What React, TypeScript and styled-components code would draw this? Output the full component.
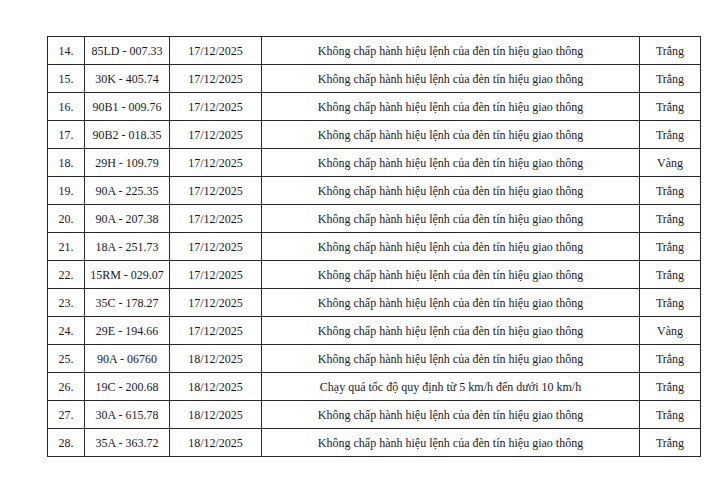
import React from "react";
import styled, { createGlobalStyle } from "styled-components";

const GlobalStyle = createGlobalStyle`
  html, body {
    margin: 0;
    padding: 0;
    background: #ffffff;
  }
`;

const Page = styled.div`
  width: 720px;
  height: 487px;
  padding: 36px 0 0 47px;
  box-sizing: border-box;
  background: #fff;
`;

const Table = styled.table`
  border-collapse: collapse;
  table-layout: fixed;
  font-family: "Liberation Serif", "Times New Roman", serif;
  font-size: 12px;
  color: #1a1a1a;
`;

const Row = styled.tr`
  height: 28px;
`;

const Col = styled.col<{ $w: number }>`
  width: ${(p) => p.$w}px;
`;

const Cell = styled.td`
  border: 1px solid #2a2a2a;
  text-align: center;
  vertical-align: middle;
  padding: 2px 0 0;
  white-space: nowrap;
`;

const cols = [37, 85, 92, 378, 61];

const LIGHT = "Không chấp hành hiệu lệnh của đèn tín hiệu giao thông";
const SPEED = "Chạy quá tốc độ quy định từ 5 km/h đến dưới 10 km/h";

const rows = [
  ["14.", "85LD - 007.33", "17/12/2025", LIGHT, "Trắng"],
  ["15.", "30K - 405.74", "17/12/2025", LIGHT, "Trắng"],
  ["16.", "90B1 - 009.76", "17/12/2025", LIGHT, "Trắng"],
  ["17.", "90B2 - 018.35", "17/12/2025", LIGHT, "Trắng"],
  ["18.", "29H - 109.79", "17/12/2025", LIGHT, "Vàng"],
  ["19.", "90A - 225.35", "17/12/2025", LIGHT, "Trắng"],
  ["20.", "90A - 207.38", "17/12/2025", LIGHT, "Trắng"],
  ["21.", "18A - 251.73", "17/12/2025", LIGHT, "Trắng"],
  ["22.", "15RM - 029.07", "17/12/2025", LIGHT, "Trắng"],
  ["23.", "35C - 178.27", "17/12/2025", LIGHT, "Trắng"],
  ["24.", "29E - 194.66", "17/12/2025", LIGHT, "Vàng"],
  ["25.", "90A - 06760", "18/12/2025", LIGHT, "Trắng"],
  ["26.", "19C - 200.68", "18/12/2025", SPEED, "Trắng"],
  ["27.", "30A - 615.78", "18/12/2025", LIGHT, "Trắng"],
  ["28.", "35A - 363.72", "18/12/2025", LIGHT, "Trắng"],
];

export default function App() {
  return (
    <>
      <GlobalStyle />
      <Page>
        <Table style={{ width: cols.reduce((a, b) => a + b, 0) + 1 }}>
          <colgroup>
            {cols.map((w, i) => (
              <Col key={i} $w={w} />
            ))}
          </colgroup>
          <tbody>
            {rows.map((r) => (
              <Row key={r[0]}>
                {r.map((c, i) => (
                  <Cell key={i}>{c}</Cell>
                ))}
              </Row>
            ))}
          </tbody>
        </Table>
      </Page>
    </>
  );
}
